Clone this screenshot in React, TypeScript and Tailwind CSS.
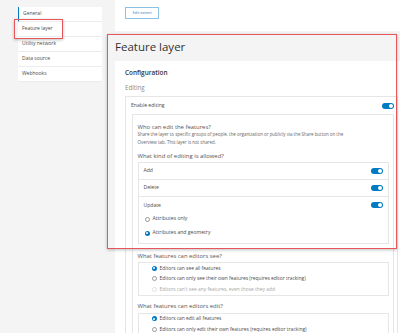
import React from "react";

const font = { fontFamily: "'Open Sans', 'Noto Sans', sans-serif" };

function Toggle() {
  return (
    <div className="relative w-[12px] h-[6px] rounded-full bg-[#007ac2] shrink-0">
      <div className="absolute right-[1px] top-[1px] w-[4px] h-[4px] rounded-full bg-white" />
    </div>
  );
}

function Radio({ checked, disabled }: { checked?: boolean; disabled?: boolean }) {
  if (checked) {
    return (
      <div className="w-[5px] h-[5px] rounded-full bg-[#007ac2] flex items-center justify-center shrink-0">
        <div className="w-[2px] h-[2px] rounded-full bg-white" />
      </div>
    );
  }
  return (
    <div
      className={
        "w-[5px] h-[5px] rounded-full border-[0.7px] bg-white shrink-0 " +
        (disabled ? "border-[#e2e2e2]" : "border-[#9a9a9a]")
      }
    />
  );
}

const sideItems = ["General", "Feature layer", "Utility network", "Data source", "Webhooks"];

export default function App() {
  return (
    <div
      className="relative w-[400px] h-[333px] overflow-hidden bg-[#f4f4f4] text-[#4a4a4a] flex items-start"
      style={font}
    >
      {/* Sidebar */}
      <div className="ml-[18px] mt-[7px] w-[84px] shrink-0 bg-white flex flex-col">
        {sideItems.map((s, i) => (
          <div
            key={s}
            className={
              "h-[15px] flex items-center pl-[4px] text-[5px] text-[#4a4a4a] border-b-[0.5px] border-[#ececec] " +
              (i === 0 ? "border-l-[1.5px] border-l-[#007ac2] pl-[2.5px]" : "")
            }
          >
            {s}
          </div>
        ))}
      </div>

      {/* Main */}
      <div className="ml-[13px] w-[293px] shrink-0 flex flex-col">
        <div className="h-[31px] shrink-0 bg-white pl-[10px] pt-[7px]">
          <div className="w-[34px] h-[12px] border-[0.7px] border-[#8cc1e4] flex items-center justify-center text-[3.8px] text-[#2b7fc0]">
            Edit extent
          </div>
        </div>
        <div className="h-[30px] shrink-0 pt-[9px]">
          <div className="text-[11.5px] leading-[14px] font-medium text-[#323232]">Feature layer</div>
        </div>
        <div className="bg-white pl-[10px] pt-[8px] flex flex-col shrink-0">
          <div className="text-[6.4px] leading-[8px] font-semibold text-[#323232]">Configuration</div>
          <div className="mt-[7px] text-[6.2px] leading-[8px] text-[#8c8c8c]">Editing</div>
          <div className="mt-[4px] w-[273px] border-[0.7px] border-[#e6e6e6]">
            <div className="h-[17px] flex items-center justify-between pl-[5px] pr-[3px] text-[5.1px]">
              <span>Enable editing</span>
              <Toggle />
            </div>
            <div className="ml-[5.5px] w-[262px] border-[0.7px] border-[#e6e6e6] pl-[5px] pt-[8px] pb-[4px]">
              <div className="text-[5.9px] leading-[8px] text-[#555]">Who can edit the features?</div>
              <div className="text-[4.45px] leading-[7.5px] text-[#666] whitespace-nowrap">
                Share the layer to specific groups of people, the organization or publicly via the Share button on the
                <br />
                Overview tab. This layer is not shared.
              </div>
              <div className="mt-[6px] text-[5.9px] leading-[8px] text-[#555]">What kind of editing is allowed?</div>
              <div className="mt-[2px] w-[251px] border-[0.7px] border-[#e6e6e6] text-[5.1px]">
                <div className="h-[17px] flex items-center justify-between pl-[5px] pr-[5px] border-b-[0.7px] border-[#e6e6e6]">
                  <span>Add</span>
                  <Toggle />
                </div>
                <div className="h-[17px] flex items-center justify-between pl-[5px] pr-[5px] border-b-[0.7px] border-[#e6e6e6]">
                  <span>Delete</span>
                  <Toggle />
                </div>
                <div className="pl-[5px] pr-[5px] pb-[3px]">
                  <div className="h-[15px] pt-[4px] flex items-start justify-between">
                    <span className="leading-[8px]">Update</span>
                    <div className="mt-[1px]">
                      <Toggle />
                    </div>
                  </div>
                  <div className="h-[14px] flex items-center gap-[3px] pl-[1px]">
                    <Radio />
                    <span>Attributes only</span>
                  </div>
                  <div className="h-[14px] flex items-center gap-[3px] pl-[1px]">
                    <Radio checked />
                    <span>Attributes and geometry</span>
                  </div>
                </div>
              </div>

              <div className="mt-[8px] text-[5.9px] leading-[8px] text-[#555]">What features can editors see?</div>
              <div className="mt-[2px] w-[251px] border-[0.7px] border-[#e6e6e6] text-[4.9px] pl-[13px]">
                <div className="h-[10.5px] flex items-center gap-[3px]">
                  <Radio checked />
                  <span>Editors can see all features</span>
                </div>
                <div className="h-[10.5px] flex items-center gap-[3px]">
                  <Radio />
                  <span>Editors can only see their own features (requires editor tracking)</span>
                </div>
                <div className="h-[10.5px] flex items-center gap-[3px] text-[#a8a8a8]">
                  <Radio disabled />
                  <span>Editors can't see any features, even those they add</span>
                </div>
              </div>

              <div className="mt-[6px] text-[5.9px] leading-[8px] text-[#555]">What features can editors edit?</div>
              <div className="mt-[3px] w-[251px] border-[0.7px] border-[#e6e6e6] text-[4.9px] pl-[13px]">
                <div className="h-[10.5px] flex items-center gap-[3px]">
                  <Radio checked />
                  <span>Editors can edit all features</span>
                </div>
                <div className="h-[10.5px] flex items-center gap-[3px]">
                  <Radio />
                  <span>Editors can only edit their own features (requires editor tracking)</span>
                </div>
              </div>
            </div>
          </div>
        </div>
      </div>

      {/* Annotation highlights */}
      <div className="absolute left-[14px] top-[19px] w-[49px] h-[20px] border-[1.5px] border-[#e8555b] shadow-[0_1px_3px_rgba(0,0,0,0.25)] pointer-events-none" />
      <div className="absolute left-[107px] top-[34px] w-[290px] h-[215px] border-[1.5px] border-[#e8555b] shadow-[0_1px_3px_rgba(0,0,0,0.25)] pointer-events-none" />
    </div>
  );
}
